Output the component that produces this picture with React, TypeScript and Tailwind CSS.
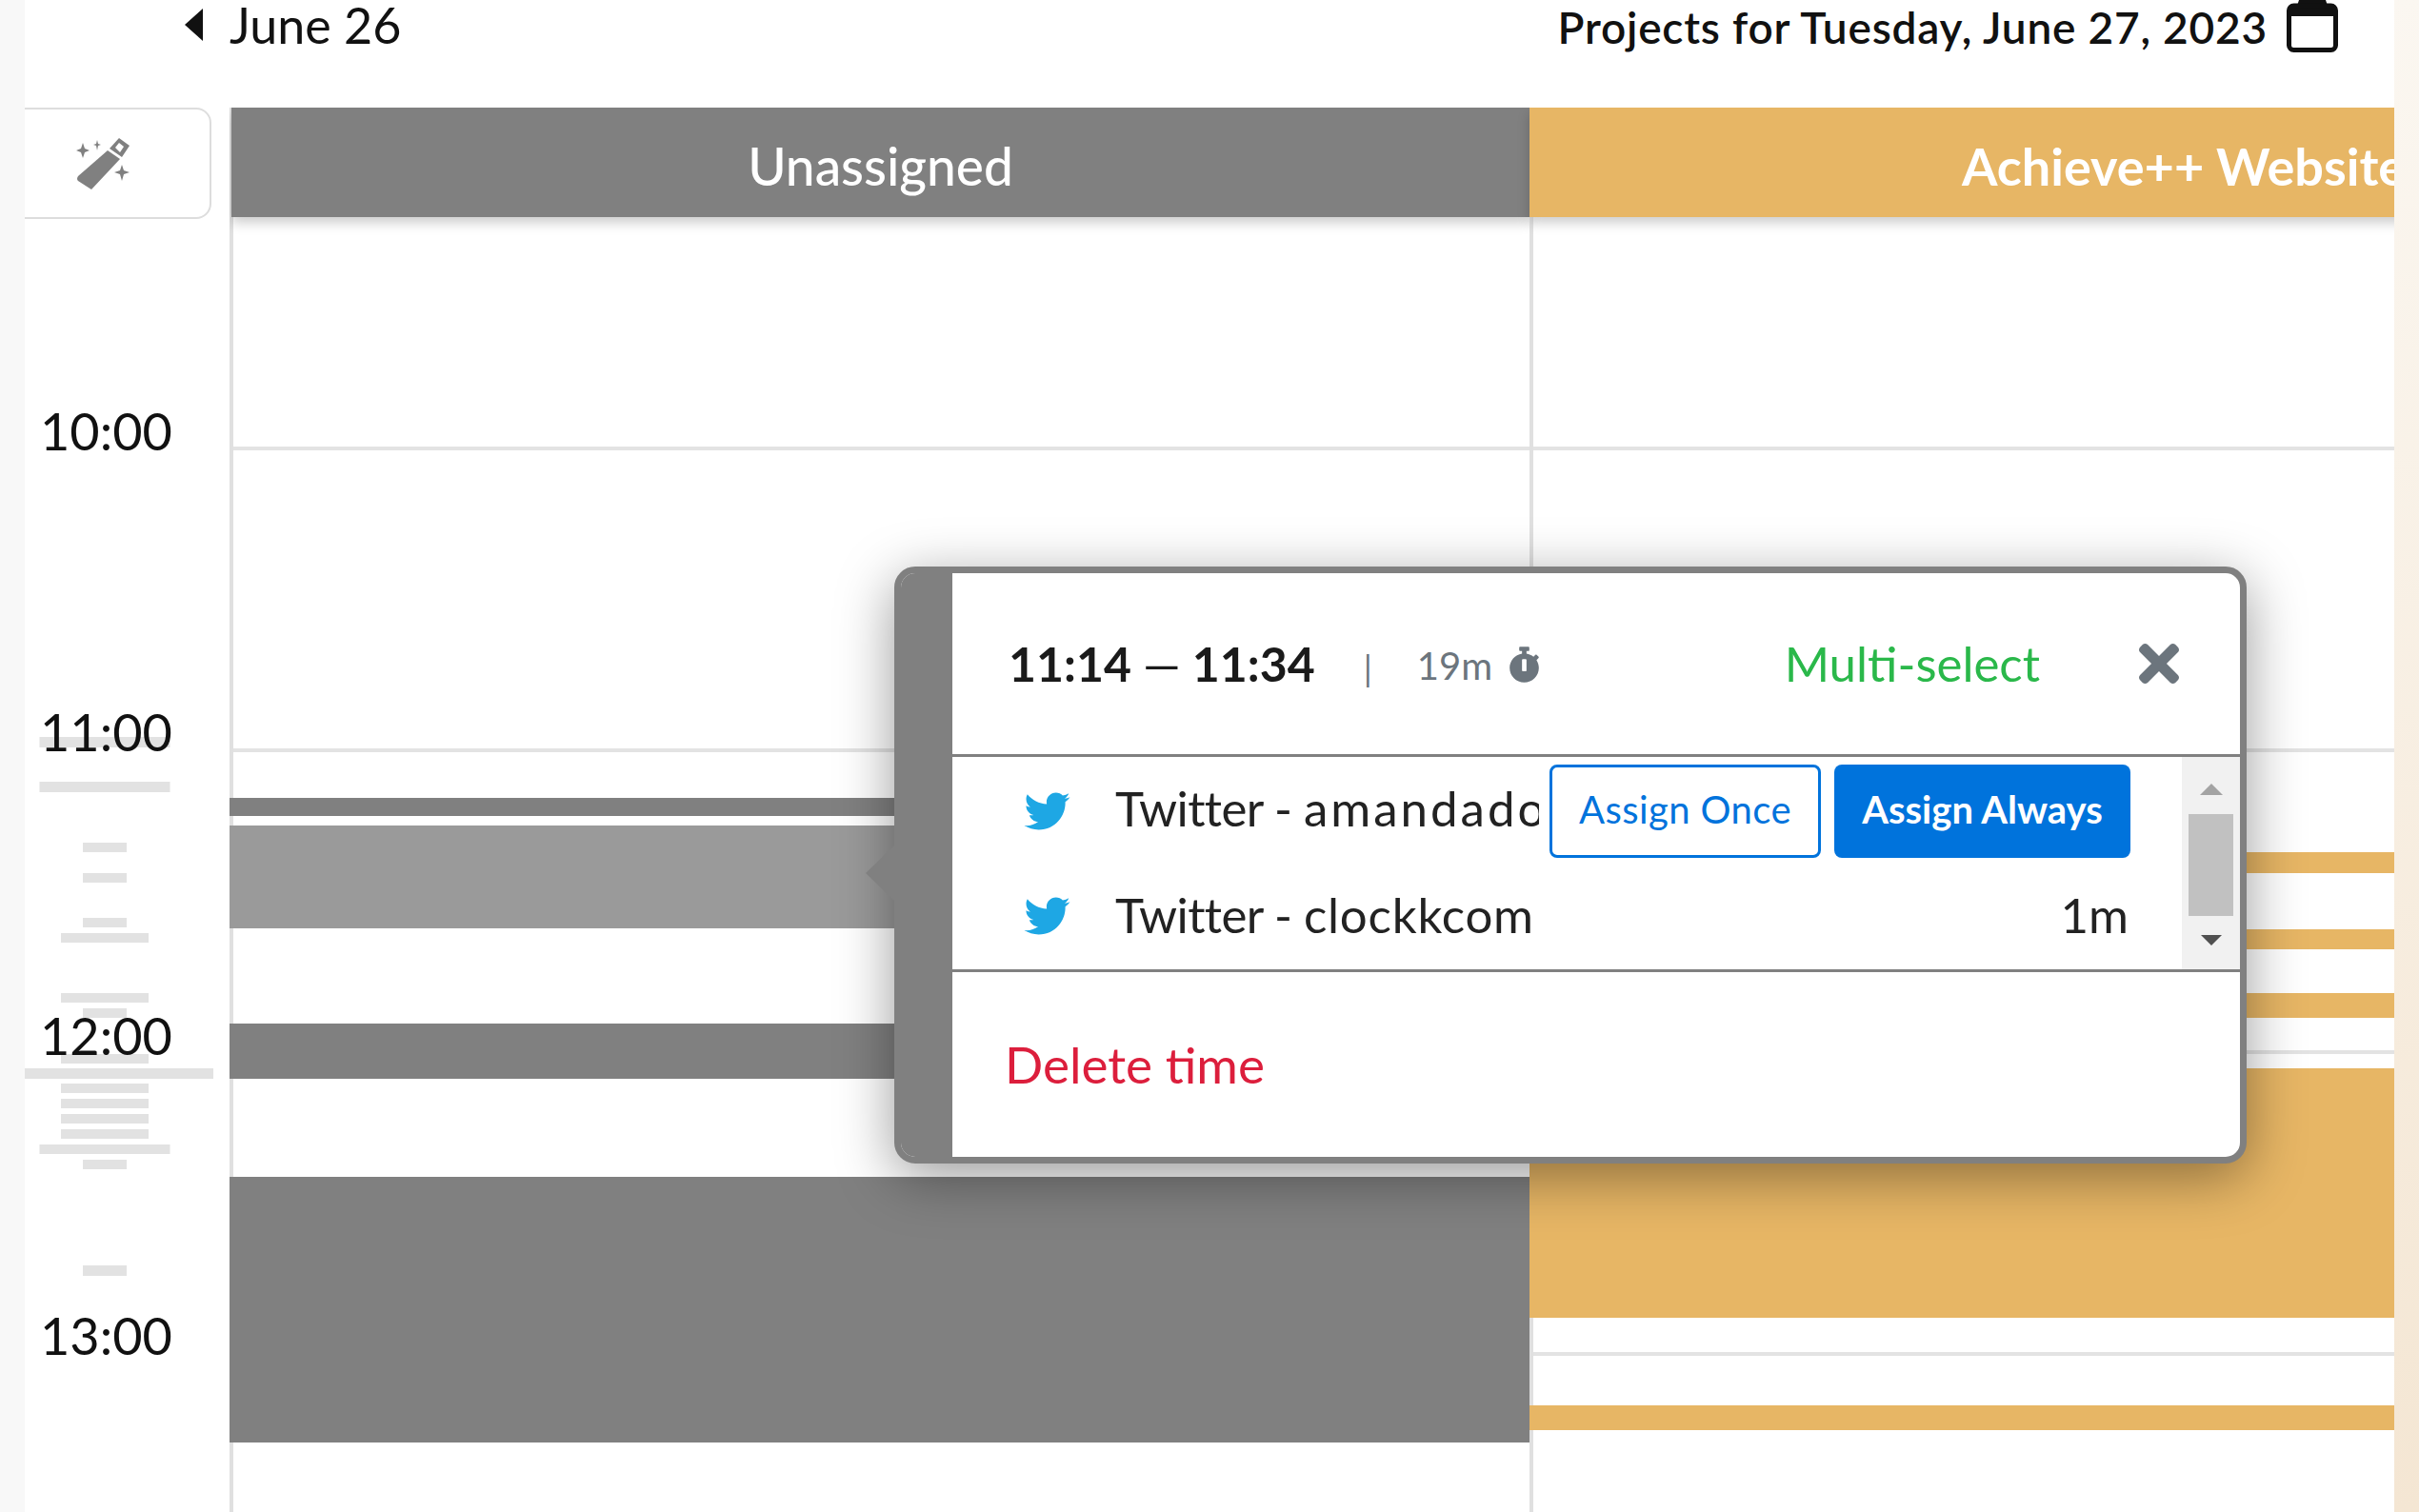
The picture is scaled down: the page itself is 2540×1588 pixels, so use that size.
import { FaStopwatch, FaTimes, FaTwitter } from "react-icons/fa";

// y positions are measured from the top of the page
const gutterMarks = [
  { top: 774, w: 137, h: 11 },
  { top: 821, w: 137, h: 11 },
  { top: 885, w: 46, h: 10 },
  { top: 917, w: 46, h: 10 },
  { top: 964, w: 46, h: 10 },
  { top: 980, w: 92, h: 10 },
  { top: 1043, w: 92, h: 10 },
  { top: 1059, w: 46, h: 10 },
  { top: 1107, w: 92, h: 10 },
  { top: 1138, w: 92, h: 10 },
  { top: 1154, w: 92, h: 10 },
  { top: 1170, w: 92, h: 10 },
  { top: 1186, w: 92, h: 10 },
  { top: 1202, w: 137, h: 10 },
  { top: 1218, w: 46, h: 10 },
  { top: 1329, w: 46, h: 11 },
];

const hours = [
  { label: "10:00", top: 425 },
  { label: "11:00", top: 741 },
  { label: "12:00", top: 1060 },
  { label: "13:00", top: 1375 },
];

const unassignedBlocks = [
  { top: 838, h: 19, color: "#808080" },
  { top: 867, h: 108, color: "#9a9a9a" },
  { top: 1075, h: 58, color: "#808080" },
  { top: 1236, h: 279, color: "#808080" },
];

const achieveBlocks = [
  { top: 895, h: 22 },
  { top: 976, h: 21 },
  { top: 1043, h: 26 },
  { top: 1122, h: 262 },
  { top: 1476, h: 26 },
];

const font = "font-['Lato','Liberation_Sans',sans-serif]";

function WandIcon() {
  return (
    <svg width="60" height="58" viewBox="0 0 60 56" fill="#808080">
      <path d="M36 12 L46 1 L57 9 L49 21 Z M42 11 L46 6 L51 10 L47 16 Z" fillRule="evenodd" />
      <path d="M34 14 L47 23 L17 55 L3 46 Q1 44 3 41 Z" />
      <path d="M8 6 L10 12 L15 14 L10 16 L8 22 L6 16 L1 14 L6 12 Z" />
      <path d="M23 3 L24 7 L27 8 L24 9 L23 14 L22 9 L19 8 L22 7 Z" />
      <path d="M49 29 L51 35 L57 37 L51 39 L49 46 L47 39 L41 37 L47 35 Z" />
    </svg>
  );
}

function CalendarIcon() {
  return (
    <svg width="54" height="55" viewBox="0 0 54 55" fill="none">
      <path d="M13 0 H41 L43 6 H11 Z" fill="#111" />
      <path d="M2 6 H52 V17 H2 Z" fill="#111" />
      <rect x="2.5" y="6" width="49" height="46.5" rx="5" stroke="#111" strokeWidth="5" />
    </svg>
  );
}

function Gutter() {
  return (
    <div className="relative h-full w-[215px] shrink-0">
      <div className="flex h-[117px] w-[196px] items-center rounded-r-2xl border-y-2 border-r-2 border-[#dddddd] bg-white pl-[53px]">
        <WandIcon />
      </div>
      {gutterMarks.map((m) => (
        <div
          key={m.top}
          className="absolute left-[84px] -translate-x-1/2 bg-[#e2e2e2]"
          style={{ top: m.top - 113, width: m.w, height: m.h }}
        />
      ))}
      <div className="absolute left-0 top-[1009px] h-[11px] w-[198px] bg-[#e2e2e2]" />
      {hours.map((h) => (
        <div
          key={h.label}
          className={`absolute left-[16px] w-[137px] text-center text-[54px] leading-[56px] text-[#111111] ${font}`}
          style={{ top: h.top - 113 }}
        >
          {h.label}
        </div>
      ))}
    </div>
  );
}

function Column({ title, color, className, titleClassName, children }: { title: string; color: string; className: string; titleClassName: string; children: React.ReactNode }) {
  return (
    <div className={`relative flex h-full shrink-0 flex-col border-l-[4px] border-[#e0e0e0] ${className}`}>
      <div className="h-[360px] shrink-0 border-b-[4px] border-[#e3e3e3]" />
      <div className="h-[317px] shrink-0 border-b-[4px] border-[#e3e3e3]" />
      <div className="h-[317px] shrink-0 border-b-[4px] border-[#e3e3e3]" />
      <div className="h-[317px] shrink-0 border-b-[4px] border-[#e3e3e3]" />
      {children}
      <div
        className={`absolute right-0 top-0 flex h-[115px] items-center pt-[8px] text-white shadow-[0_6px_12px_rgba(0,0,0,0.2)] ${font} ${titleClassName}`}
        style={{ backgroundColor: color }}
      >
        {title}
      </div>
    </div>
  );
}

function Block({ top, h, color }: { top: number; h: number; color: string }) {
  return <div className="absolute -left-[4px] right-0" style={{ top: top - 113, height: h, backgroundColor: color }} />;
}

function Popup() {
  return (
    <div className="absolute left-[939px] top-[595px] z-10 h-[627px] w-[1420px]">
      <div className={`flex h-full overflow-hidden rounded-[22px] border-[7px] border-[#808080] bg-white shadow-[0_14px_60px_rgba(0,0,0,0.4)] ${font}`}>
        <div className="w-[54px] shrink-0 bg-[#808080]" />
        <div className="flex min-w-0 flex-1 flex-col">
          <div className="flex h-[193px] shrink-0 items-center border-b-[3px] border-[#808080] pl-[59px] pr-[64px]">
            <span className="text-[50px] font-bold text-[#1a1a1a]">
              11:14 <span className="font-normal">—</span> 11:34
            </span>
            <span className="ml-[51px] mt-[10px] text-[36px] text-[#6c757d]">|</span>
            <span className="ml-[47px] mt-[4px] text-[40px] text-[#6c757d]">19m</span>
            <FaStopwatch className="ml-[17px] mt-[2px] h-[38px] w-[33px] text-[#6c757d]" />
            <span className="ml-auto text-[51px] text-[#2ab84a]">Multi-select</span>
            <FaTimes className="ml-[104px] h-[62px] w-[42px] text-[#6c757d]" />
          </div>

          <div className="flex h-[226px] shrink-0 border-b-[3px] border-[#808080]">
            <div className="flex min-w-0 flex-1 flex-col justify-center text-[51px] text-[#222222]">
              <div className="flex h-[110px] items-center pl-[75px]">
                <FaTwitter className="h-[48px] w-[49px] shrink-0 text-[#1ea7e4]" />
                <span className="mb-[4px] ml-[47px] w-[445px] shrink-0 overflow-hidden whitespace-nowrap">
                  <span className="tracking-[-0.6px]">Twitter - </span>
                  <span className="tracking-[3px]">amandadoe</span>
                </span>
                <button className="ml-[11px] h-[98px] w-[285px] shrink-0 rounded-lg border-[3px] border-[#0073dc] pb-[3px] text-[40px] tracking-[0.4px] text-[#0073dc]">
                  Assign Once
                </button>
                <button className="ml-[14px] h-[98px] w-[311px] shrink-0 rounded-lg bg-[#0073dc] pb-[3px] text-[40px] font-bold text-white">
                  Assign Always
                </button>
              </div>
              <div className="flex h-[110px] items-center pl-[75px] pr-[56px]">
                <FaTwitter className="h-[48px] w-[49px] shrink-0 text-[#1ea7e4]" />
                <span className="ml-[47px] whitespace-nowrap">
                  <span className="tracking-[-0.6px]">Twitter - </span>
                  <span className="tracking-[0.8px]">clockkcom</span>
                </span>
                <span className="ml-auto">1m</span>
              </div>
            </div>
            <div className="flex w-[61px] shrink-0 flex-col items-center bg-[#f1f1f1]">
              <div className="mt-[28px] h-0 w-0 border-x-[12px] border-b-[12px] border-x-transparent border-b-[#a3a3a3]" />
              <div className="mt-[20px] h-[107px] w-[47px] bg-[#c1c1c1]" />
              <div className="mt-[20px] h-0 w-0 border-x-[11px] border-t-[11px] border-x-transparent border-t-[#505050]" />
            </div>
          </div>

          <div className="flex flex-1 items-center pl-[55px] text-[53px] text-[#dc1e3c]">Delete time</div>
        </div>
      </div>
      <div className="absolute -left-[30px] top-[293px] h-0 w-0 border-y-[29px] border-r-[30px] border-y-transparent border-r-[#808080]" />
    </div>
  );
}

export default function App() {
  return (
    <div className="relative flex h-[1588px] w-[2540px] overflow-hidden bg-white">
      <div className="w-[26px] shrink-0 bg-[#f8f8f8]" />

      <div className="flex min-w-0 flex-1 flex-col">
        <div className={`flex h-[113px] shrink-0 items-start justify-between pl-[168px] pr-[59px] text-[#111111] ${font}`}>
          <div className="flex items-center text-[52px] leading-[52px]">
            <div className="h-0 w-0 border-y-[17px] border-r-[19px] border-y-transparent border-r-[#111111]" />
            <span className="ml-[28px]">June 26</span>
          </div>
          <div className="flex items-start">
            <span className="mt-[2px] text-[46px] font-semibold leading-[54px] tracking-[0.8px]">Projects for Tuesday, June 27, 2023</span>
            <div className="ml-[20px]">
              <CalendarIcon />
            </div>
          </div>
        </div>

        <div className="flex min-h-0 flex-1">
          <Gutter />
          <div className="flex min-w-0 flex-1 overflow-hidden">
            <Column title="Unassigned" color="#808080" className="w-[1365px]" titleClassName="-left-[2px] justify-center text-[55px] font-medium">
              {unassignedBlocks.map((b) => (
                <Block key={b.top} top={b.top} h={b.h} color={b.color} />
              ))}
            </Column>
            <Column title="Achieve++ Website" color="#e7b665" className="w-[1400px]" titleClassName="-left-[4px] whitespace-nowrap pl-[454px] text-[54px] font-bold">
              {achieveBlocks.map((b) => (
                <Block key={b.top} top={b.top} h={b.h} color="#e7b665" />
              ))}
            </Column>
          </div>
        </div>
      </div>

      <div className="w-[26px] shrink-0 bg-gradient-to-b from-[#fbf7f1] to-[#f4e6d3]" />

      <Popup />
    </div>
  );
}
